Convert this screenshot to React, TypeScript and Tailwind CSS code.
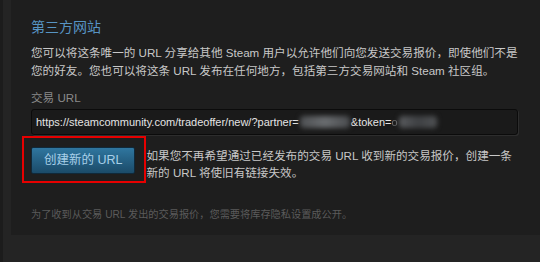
export default function App() {
  return (
    <div className="w-[540px] h-[262px] overflow-hidden bg-[#1c1c1c] pl-[3px] font-['Liberation_Sans','Noto_Sans_CJK_SC',sans-serif]">
      <div className="h-full bg-[#242424] pl-[8px] pb-[27px]">
        <div className="h-full bg-[#1e1e1e] pl-5 pt-[17px]">
          <h2 className="text-[14px] leading-[20px] text-[#5794c3]">第三方网站</h2>

          <p className="mt-[7px] whitespace-nowrap text-[11.6px] leading-[18px] text-[#c8c8c8]">
            您可以将这条唯一的 URL 分享给其他 Steam 用户以允许他们向您发送交易报价，即使他们不是
            <br />
            您的好友。您也可以将这条 URL 发布在任何地方，包括第三方交易网站和 Steam 社区组。
          </p>

          <div className="mt-[9px] text-[11.6px] leading-[18px] text-[#8a8a8a]">交易 URL</div>

          <div className="mt-[2px] flex h-[26px] w-[487px] items-center rounded-[3px] border border-[#0b0b0b] bg-[#1a1a1a] pl-[4px] shadow-[1px_1px_0_rgba(255,255,255,0.07)]">
            <span className="whitespace-nowrap text-[11px] text-[#e4e4e4]">
              https://steamcommunity.com/tradeoffer/new/?partner=
            </span>
            <span className="mx-[1px] inline-block h-[12px] w-[50px] rounded-sm bg-linear-to-r from-[#4d4f52] via-[#6a6d70] to-[#4a4c4f] blur-[2.5px]" />
            <span className="whitespace-nowrap text-[11px] text-[#e4e4e4]">&amp;token=</span>
            <span className="text-[11px] text-[#6b6b6b] blur-[0.6px]">o</span>
            <span className="ml-[1px] inline-block h-[12px] w-[38px] rounded-sm bg-linear-to-r from-[#5a5c5f] via-[#3f4144] to-[#505254] blur-[2.5px]" />
          </div>

          <div className="mt-[12px] flex items-start gap-[11px]">
            <div className="relative shrink-0">
              <button className="h-[27px] rounded-[2px] border border-[#10293a] bg-linear-to-b from-[#2f769f] to-[#1b4b69] px-[12px] text-[12.5px] leading-[25px] text-[#a8d0e9]">
                创建新的 URL
              </button>
              <div className="pointer-events-none absolute -top-[11px] -bottom-[9px] -left-[9px] -right-[11px] border-2 border-[#e60000]" />
            </div>
            <p className="whitespace-nowrap text-[11.6px] leading-[17px] text-[#c8c8c8]">
              如果您不再希望通过已经发布的交易 URL 收到新的交易报价，创建一条
              <br />
              新的 URL 将使旧有链接失效。
            </p>
          </div>

          <p className="mt-[26px] whitespace-nowrap text-[10.2px] leading-[16px] text-[#5b5b5b]">
            为了收到从交易 URL 发出的交易报价，您需要将库存隐私设置成公开。
          </p>
        </div>
      </div>
    </div>
  );
}
